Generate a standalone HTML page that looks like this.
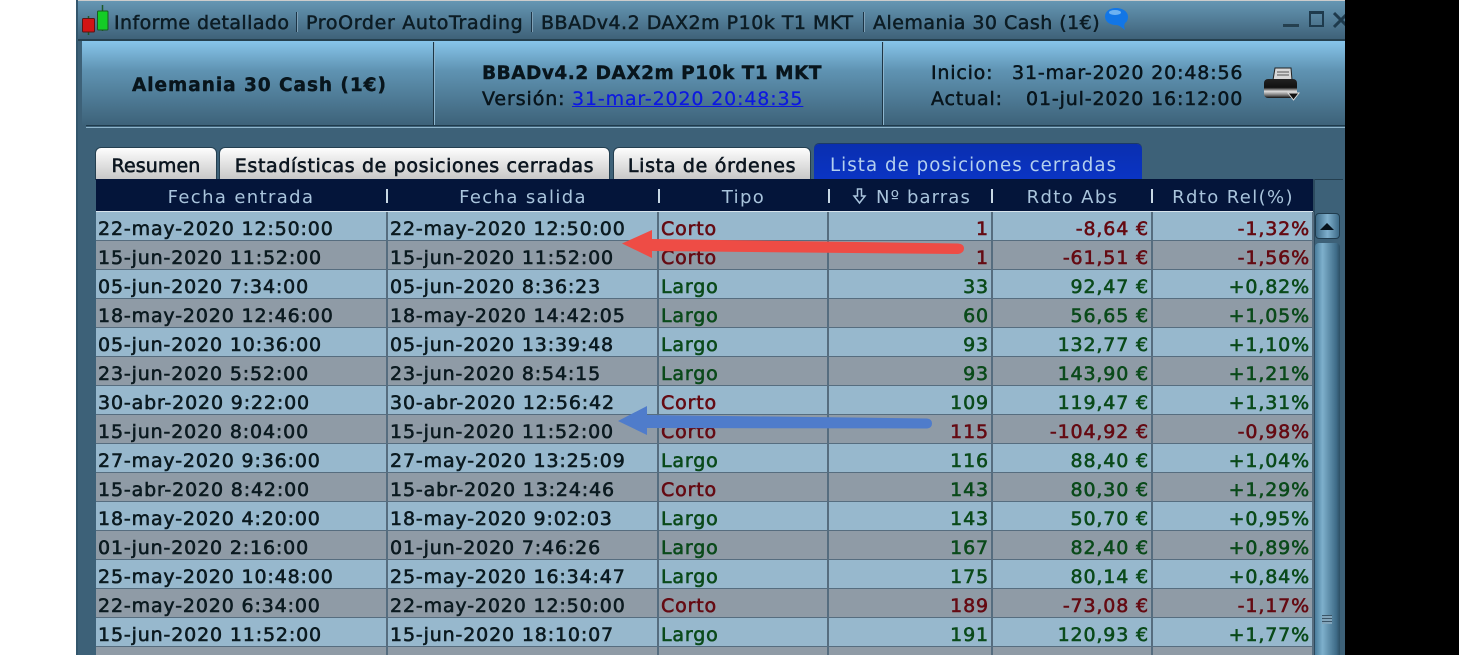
<!DOCTYPE html>
<html><head><meta charset="utf-8"><style>
html,body{margin:0;padding:0;width:1459px;height:655px;overflow:hidden;background:#fff;font-family:"DejaVu Sans","Liberation Sans",sans-serif}
.a{position:absolute;white-space:nowrap}
#w{position:absolute;left:0;top:0;width:1459px;height:655px;overflow:hidden;filter:blur(.3px)}
table{position:absolute;left:96px;top:212px;border-collapse:collapse;table-layout:fixed;width:1217px;font-size:19px;letter-spacing:.85px;color:#0b1a20;-webkit-text-stroke:.6px}
td{height:22px;padding:6px 2px 0;border-right:2px solid #566d7f;border-bottom:1px solid #566d7f;overflow:hidden;white-space:nowrap;line-height:22px;box-sizing:content-box}
tr:nth-child(odd){background:#97b8cd}tr:nth-child(even){background:#8f9ba6}
td:nth-child(n+4){text-align:right}
.s{color:#650a12}.l{color:#0a4a1a}
.h{color:#a9c4dc;font-size:18px;letter-spacing:1.37px;top:187px;line-height:22px;text-align:center}
.t{top:11px;font-size:19px;color:#0c1c24;line-height:24px;-webkit-text-stroke:.5px}
.d{font-size:19px;line-height:24px;color:#08151c;-webkit-text-stroke:.5px}
.v{top:12px;width:1px;height:20px;background:#1c3445;border-right:1px solid #7fa0b5}
.tab{top:148px;height:31px;border-radius:5px 5px 0 0;background:linear-gradient(#fdfdfd,#c8c8c8);font-size:19px;line-height:36px;text-align:center;color:#0c1620;-webkit-text-stroke:.6px;box-shadow:0 0 0 1px #243f50}
.sep{width:1.5px;height:14px;background:#c8d8e4;top:189px}
</style></head><body><div id="w">
<div class="a" style="left:76px;top:0;width:1269px;height:655px;background:#3d6178"></div>
<div class="a" style="left:76px;top:0;width:2px;height:655px;background:#33566c"></div>
<div class="a" style="left:78px;top:1px;width:1267px;height:39px;background:linear-gradient(#6596b3,#3d6077)"></div>
<div class="a" style="left:78px;top:0;width:1267px;height:1px;background:#ccc"></div>
<div class="a" style="left:78px;top:39px;width:1267px;height:2px;background:#25404f"></div>
<svg class="a" style="left:80px;top:4px" width="34" height="32" viewBox="0 0 34 32"><path d="M8.500 12v19M22.500 1v26" stroke="#1d5a28" stroke-width="1.500"/><rect x="2.500" y="14.500" width="12" height="13.500" rx="1" fill="#d21414" stroke="#5a1515"/><rect x="17.500" y="7" width="10.500" height="19" rx="1" fill="#14cc26" stroke="#1a5a20"/></svg>
<div class="a t" style="left:114px;letter-spacing:.41px">Informe detallado</div>
<div class="a v" style="left:296px"></div>
<div class="a t" style="left:306px;letter-spacing:.67px">ProOrder AutoTrading</div>
<div class="a v" style="left:531px"></div>
<div class="a t" style="left:541px;letter-spacing:.5px">BBADv4.2 DAX2m P10k T1 MKT</div>
<div class="a v" style="left:863px"></div>
<div class="a t" style="left:873px;letter-spacing:.47px">Alemania 30 Cash (1€)</div>
<svg class="a" style="left:1104px;top:7px" width="26" height="24" viewBox="0 0 26 24"><path d="M12 1C5.500 1 1 4.500 1 9.500C1 14.500 5.500 18 12 18C15 18 17 20 21 23C20 20 20 18 21 16C23.500 14.500 24 12 24 9.500C24 4.500 18.500 1 12 1Z" fill="#1276e6"/><ellipse cx="11" cy="5.500" rx="6" ry="2.500" fill="#6db2f2"/></svg>
<div class="a" style="left:1283px;top:24px;width:16px;height:3px;background:#25404f"></div>
<div class="a" style="left:1309px;top:11px;width:15px;height:16px;border:2px solid #1e3a4c;border-top-width:3px;box-sizing:border-box"></div>
<svg class="a" style="left:1333px;top:11px" width="12" height="18"><path d="M1 2l14 14M15 2L1 16" stroke="#1e3a4c" stroke-width="3"/></svg>

<div class="a" style="left:82px;top:41px;width:1263px;height:84px;background:linear-gradient(#87c5eb,#5f93b2 35%,#3d6279)"></div>
<div class="a" style="left:433px;top:42px;width:1px;height:83px;background:#1d3646;border-right:1px solid #8db5cd"></div>
<div class="a" style="left:882px;top:42px;width:1px;height:83px;background:#1d3646;border-right:1px solid #8db5cd"></div>
<div class="a" style="left:86px;top:125px;width:1259px;height:1px;background:#1f3a4b"></div>
<div class="a" style="left:86px;top:127px;width:1259px;height:1px;background:#8fb5cc"></div>

<div class="a" style="left:132px;top:74px;font-size:18.5px;font-weight:bold;letter-spacing:.95px;line-height:24px;color:#08151c;-webkit-text-stroke:.4px">Alemania 30 Cash (1€)</div>
<div class="a" style="left:482px;top:62px;font-size:18.5px;font-weight:bold;letter-spacing:.5px;line-height:24px;color:#08151c;-webkit-text-stroke:.4px">BBADv4.2 DAX2m P10k T1 MKT</div>
<div class="a d" style="left:482px;top:87px;letter-spacing:.9px">Versión:</div>
<div class="a d" style="left:572px;top:87px;letter-spacing:.85px;color:#0c18e0;text-decoration:underline;-webkit-text-stroke:.2px">31-mar-2020 20:48:35</div>
<div class="a d" style="left:931px;top:61px;letter-spacing:.8px">Inicio:</div>
<div class="a d" style="left:1012px;top:61px;letter-spacing:.85px">31-mar-2020 20:48:56</div>
<div class="a d" style="left:931px;top:87px;letter-spacing:.85px">Actual:</div>
<div class="a d" style="left:1026px;top:87px;letter-spacing:.85px">01-jul-2020 16:12:00</div>
<svg class="a" style="left:1262px;top:66px" width="38" height="36" viewBox="0 0 38 36"><defs><linearGradient id="p" x1="0" y1="0" x2="0" y2="1"><stop offset="0" stop-color="#222"/><stop offset=".45" stop-color="#111"/><stop offset=".65" stop-color="#ddd"/><stop offset=".85" stop-color="#777"/><stop offset="1" stop-color="#111"/></linearGradient></defs><path d="M13 2H29L30 14H11Z" fill="#d8d8d8" stroke="#222"/><path d="M15 6H27M15 9H27" stroke="#555"/><rect x="2" y="13" width="33" height="19" rx="4" fill="url(#p)"/><path d="M26 27H37L31.500 34Z" fill="#111" stroke="#ddd"/></svg>

<div class="a tab" style="left:96px;width:120px;letter-spacing:.1px">Resumen</div>
<div class="a tab" style="left:220px;width:389px;letter-spacing:.63px">Estadísticas de posiciones cerradas</div>
<div class="a tab" style="left:614px;width:196px;letter-spacing:.7px">Lista de órdenes</div>
<div class="a" style="left:814px;top:144px;width:328px;height:35px;border-radius:5px 5px 0 0;background:linear-gradient(#0a2fb0,#0a34c4);color:#b4d0ee;font-size:18.2px;line-height:43px;padding-left:16px;box-sizing:border-box;letter-spacing:1.05px;box-shadow:0 -1px 0 #1d3a66">Lista de posiciones cerradas</div>

<div class="a" style="left:96px;top:179px;width:1217px;height:32px;background:#04153a"></div>
<div class="a" style="left:1313px;top:179px;width:30px;height:1px;background:#243f50"></div>
<div class="a" style="left:1313px;top:179px;width:2px;height:476px;background:#2c4a5e"></div>
<div class="a" style="left:96px;top:211px;width:1217px;height:1px;background:#d8e4ec"></div>
<div class="a h" style="left:96px;width:290px">Fecha entrada</div>
<div class="a h" style="left:388px;width:270px">Fecha salida</div>
<div class="a h" style="left:660px;width:167px">Tipo</div>
<svg class="a" style="left:852px;top:187px" width="16" height="18" viewBox="0 0 16 18"><path d="M5.500 2h4v7h3.500L7.500 16 2 9h3.500z" fill="none" stroke="#a9c4dc" stroke-width="1.500"/></svg>
<div class="a h" style="left:876px;letter-spacing:1.1px">Nº barras</div>
<div class="a h" style="left:994px;width:157px">Rdto Abs</div>
<div class="a h" style="left:1154px;width:158px">Rdto Rel(%)</div>
<div class="a sep" style="left:386px"></div><div class="a sep" style="left:658px"></div><div class="a sep" style="left:828px"></div><div class="a sep" style="left:991px"></div><div class="a sep" style="left:1151px"></div>

<table><colgroup><col style="width:291px"><col style="width:271px"><col style="width:170px"><col style="width:164px"><col style="width:160px"><col style="width:161px"></colgroup>
<tr><td>22-may-2020 12:50:00</td><td>22-may-2020 12:50:00</td><td class="s">Corto</td><td class="s">1</td><td class="s">-8,64 €</td><td class="s">-1,32%</td></tr>
<tr><td>15-jun-2020 11:52:00</td><td>15-jun-2020 11:52:00</td><td class="s">Corto</td><td class="s">1</td><td class="s">-61,51 €</td><td class="s">-1,56%</td></tr>
<tr><td>05-jun-2020 7:34:00</td><td>05-jun-2020 8:36:23</td><td class="l">Largo</td><td class="l">33</td><td class="l">92,47 €</td><td class="l">+0,82%</td></tr>
<tr><td>18-may-2020 12:46:00</td><td>18-may-2020 14:42:05</td><td class="l">Largo</td><td class="l">60</td><td class="l">56,65 €</td><td class="l">+1,05%</td></tr>
<tr><td>05-jun-2020 10:36:00</td><td>05-jun-2020 13:39:48</td><td class="l">Largo</td><td class="l">93</td><td class="l">132,77 €</td><td class="l">+1,10%</td></tr>
<tr><td>23-jun-2020 5:52:00</td><td>23-jun-2020 8:54:15</td><td class="l">Largo</td><td class="l">93</td><td class="l">143,90 €</td><td class="l">+1,21%</td></tr>
<tr><td>30-abr-2020 9:22:00</td><td>30-abr-2020 12:56:42</td><td class="s">Corto</td><td class="l">109</td><td class="l">119,47 €</td><td class="l">+1,31%</td></tr>
<tr><td>15-jun-2020 8:04:00</td><td>15-jun-2020 11:52:00</td><td class="s">Corto</td><td class="s">115</td><td class="s">-104,92 €</td><td class="s">-0,98%</td></tr>
<tr><td>27-may-2020 9:36:00</td><td>27-may-2020 13:25:09</td><td class="l">Largo</td><td class="l">116</td><td class="l">88,40 €</td><td class="l">+1,04%</td></tr>
<tr><td>15-abr-2020 8:42:00</td><td>15-abr-2020 13:24:46</td><td class="s">Corto</td><td class="l">143</td><td class="l">80,30 €</td><td class="l">+1,29%</td></tr>
<tr><td>18-may-2020 4:20:00</td><td>18-may-2020 9:02:03</td><td class="l">Largo</td><td class="l">143</td><td class="l">50,70 €</td><td class="l">+0,95%</td></tr>
<tr><td>01-jun-2020 2:16:00</td><td>01-jun-2020 7:46:26</td><td class="l">Largo</td><td class="l">167</td><td class="l">82,40 €</td><td class="l">+0,89%</td></tr>
<tr><td>25-may-2020 10:48:00</td><td>25-may-2020 16:34:47</td><td class="l">Largo</td><td class="l">175</td><td class="l">80,14 €</td><td class="l">+0,84%</td></tr>
<tr><td>22-may-2020 6:34:00</td><td>22-may-2020 12:50:00</td><td class="s">Corto</td><td class="s">189</td><td class="s">-73,08 €</td><td class="s">-1,17%</td></tr>
<tr><td>15-jun-2020 11:52:00</td><td>15-jun-2020 18:10:07</td><td class="l">Largo</td><td class="l">191</td><td class="l">120,93 €</td><td class="l">+1,77%</td></tr>
<tr><td></td><td></td><td></td><td></td><td></td><td></td></tr>
</table>

<div class="a" style="left:1315px;top:213px;width:25px;height:26px;border-radius:4px;background:linear-gradient(90deg,#3e6b88,#7fb0cd 50%,#3e6b88);border:1px solid #203c4e;box-sizing:border-box"></div>
<svg class="a" style="left:1319px;top:222px" width="16" height="9"><path d="M1 8h14L8 1z" fill="#06121c"/></svg>
<div class="a" style="left:1315px;top:243px;width:25px;height:412px;border-radius:4px 4px 0 0;background:linear-gradient(90deg,#4a7d9c,#7eb0cc 30%,#3f6c88 85%,#2d4f64)"></div>
<div class="a" style="left:1322px;top:615px;width:10px;height:9px;background:repeating-linear-gradient(#3a5568 0 1px,#82a5bb 1px 3px)"></div>
<div class="a" style="left:1340px;top:180px;width:5px;height:475px;background:#3d6178"></div>

<svg class="a" style="left:0;top:0;pointer-events:none" width="1459" height="655" viewBox="0 0 1459 655">
<path d="M652 230L622 243.500L652 258V251L958 254Q964 253 964 248.500Q964 244 958 243.500L652 239z" fill="#ee4c45"/>
<path d="M647 406L618 421L647 435V428L927 428.500Q932 428 932 423.500Q932 419 927 418.500L647 415z" fill="#4f7ccb"/>
</svg>
<div class="a" style="left:1345px;top:0;width:114px;height:655px;background:#000"></div>
<div class="a" style="left:0;top:0;width:76px;height:655px;background:#fff"></div>
</div></body></html>
